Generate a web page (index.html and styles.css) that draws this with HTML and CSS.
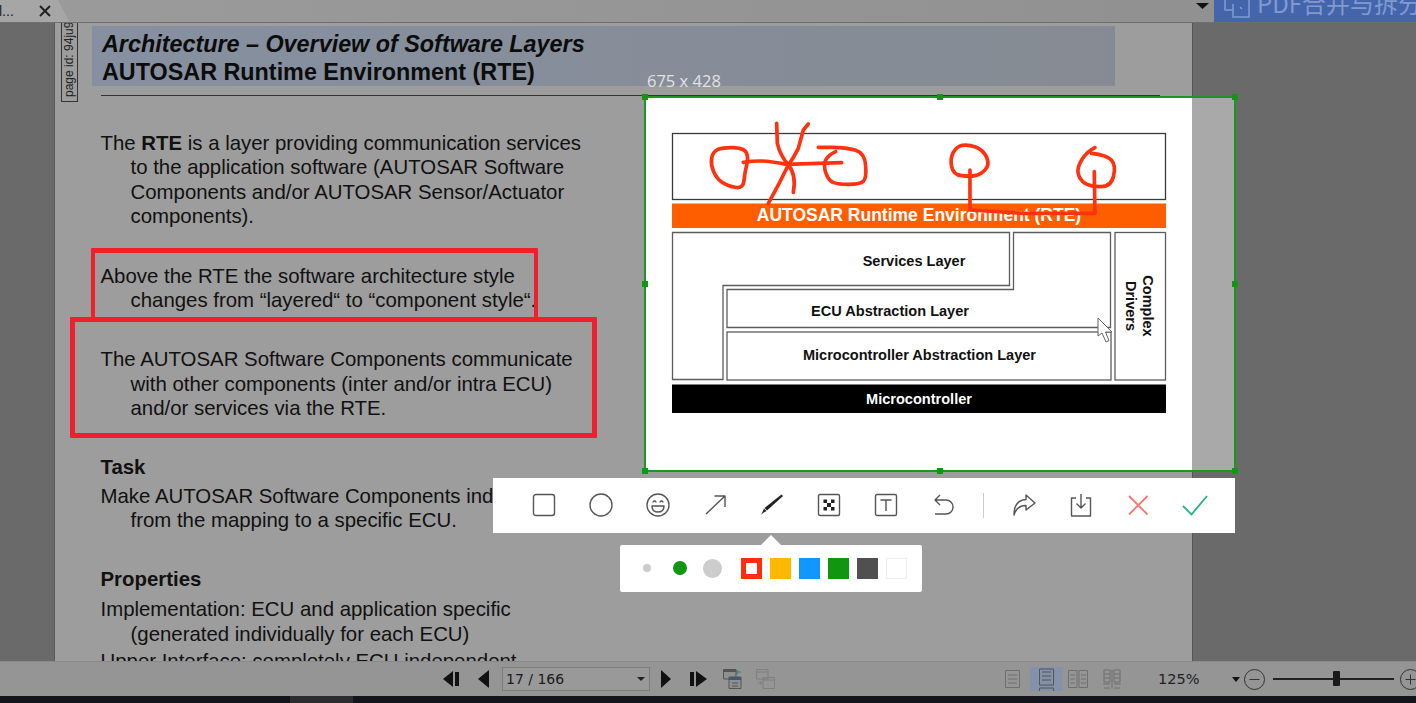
FILE: index.html
```html
<!DOCTYPE html>
<html lang="en">
<head>
<meta charset="utf-8">
<title>AUTOSAR Runtime Environment</title>
<link rel="stylesheet" href="styles.css">
</head>
<body>
<div class="app">
  <header class="tabbar">
    <div class="tab">
      <span class="tab-name">l...</span>
      <svg class="tab-close" width="12" height="12" viewBox="0 0 12 12"><path d="M1 1 11 11M11 1 1 11"/></svg>
      <svg class="tab-edge" width="14" height="23" viewBox="0 0 14 23"><path d="M0 0H2L14 23H0Z"/></svg>
    </div>
    <svg class="tab-menu" width="13" height="6" viewBox="0 0 13 6"><path d="M0 0H13L6.5 6Z"/></svg>
    <div class="merge">
      <svg class="merge-icon" width="28" height="22" viewBox="0 0 28 22"><path d="M2 -2V10H10V17H26V-2M10 10V4"/><path d="M17 7l2 2"/></svg>
      <span class="merge-text">PDF合并与拆分</span>
    </div>
  </header>

  <main class="viewer">
    <article class="page">
      <div class="page-tag">page id: 94ju9</div>
      <div class="band">
        <h1 class="title-a">Architecture – Overview of Software Layers</h1>
        <h2 class="title-b">AUTOSAR Runtime Environment (RTE)</h2>
      </div>
      <hr class="rule">
      <p class="para p1">The <b>RTE</b> is a layer providing communication services<br>to the application software (AUTOSAR Software<br>Components and/or AUTOSAR Sensor/Actuator<br>components).</p>
      <p class="para p2">Above the RTE the software architecture style<br>changes from “layered“ to “component style“.</p>
      <p class="para p3">The AUTOSAR Software Components communicate<br>with other components (inter and/or intra ECU)<br>and/or services via the RTE.</p>
      <h3 class="para sub s1">Task</h3>
      <p class="para p4">Make AUTOSAR Software Components independent<br>from the mapping to a specific ECU.</p>
      <h3 class="para sub s2">Properties</h3>
      <p class="para p5">Implementation: ECU and application specific<br>(generated individually for each ECU)</p>
      <p class="para p6">Upper Interface: completely ECU independent</p>
    </article>
  </main>

  <footer class="statusbar">
    <svg class="nav n-first" width="17" height="18" viewBox="0 0 17 18"><path d="M10 1V17L0 9Z"/><path d="M12 2H16V16H12Z"/></svg>
    <svg class="nav n-prev" width="11" height="18" viewBox="0 0 11 18"><path d="M11 0V18L0 9Z"/></svg>
    <div class="combo"><span>17 / 166</span><i class="combo-caret"></i></div>
    <svg class="nav n-next" width="10" height="18" viewBox="0 0 10 18"><path d="M0 0V18L10 9Z"/></svg>
    <svg class="nav n-last" width="17" height="18" viewBox="0 0 17 18"><path d="M0 2H4V16H0Z"/><path d="M6 1V17L17 9Z"/></svg>
    <svg class="nav n-a" width="19" height="20" viewBox="0 0 19 20">
      <path class="g1" d="M.5.5H13V10H.5Z"/><path class="g2" d="M.5.5H13V3H.5Z"/>
      <path class="g3" d="M6 8H18V19.5H6Z"/><path class="g4" d="M6 8H18V11H6Z"/><path class="g5" d="M9 14H15M9 17H15"/><path class="g6" d="M18 3H13M15 1l-2 2 2 2"/>
    </svg>
    <svg class="nav n-b" width="19" height="20" viewBox="0 0 19 20">
      <path class="f1" d="M.5.5H12V10H.5Z"/><path class="f1" d="M7 8.500H18.500V19.500H7Z"/><path class="f1" d="M.5 3H12M7 11H18.500M2 14H6M4 12l2 2-2 2"/>
    </svg>
    <svg class="view v1" width="15" height="18" viewBox="0 0 15 18"><path d="M.5.5H14.500V17.500H.5ZM3 5H12M3 9H12M3 13H12"/></svg>
    <div class="view-on"><svg class="view" width="15" height="24" viewBox="0 0 15 24"><path d="M.5 1H14.500V17H.5ZM3 4H12M3 8H12M3 12H12M.5 20H14.500V24M.5 20V24"/></svg></div>
    <svg class="view v3" width="20" height="18" viewBox="0 0 20 18"><path d="M.5.5H9V17.500H.5ZM11 .5H19.500V17.500H11ZM2.500 5H7M2.500 9H7M2.500 13H7M13 5H18M13 9H18M13 13H18"/></svg>
    <svg class="view v4" width="18" height="20" viewBox="0 0 18 20"><path d="M9 .5V19.500M1 1H7V13H1ZM11 1H17V13H11ZM1 5H7M1 9H7M11 5H17M11 9H17M0 15H7M11 15H18M1 19H7M11 19H17"/></svg>
    <span class="zoom-val">125%</span>
    <svg class="caret" width="8" height="5" viewBox="0 0 8 5"><path d="M0 0H8L4 5Z"/></svg>
    <svg class="round r-minus" width="21" height="21" viewBox="0 0 21 21"><circle cx="10.500" cy="10.500" r="10"/><path d="M5.500 10.500H15.500"/></svg>
    <div class="slider"><i class="thumb"></i></div>
    <svg class="round r-plus" width="21" height="21" viewBox="0 0 21 21"><circle cx="10.500" cy="10.500" r="10"/><path d="M5.500 10.500H15.500M10.500 5.500V15.500"/></svg>
  </footer>
  <div class="taskbar"><i class="task-item"></i></div>

  <!-- annotations drawn on the dimmed page -->
  <div class="mark mark-a"></div>
  <div class="mark mark-b"></div>

  <!-- capture selection -->
  <div class="size-label">675 x 428</div>
  <section class="selection">
    <svg class="diagram" width="592" height="376" viewBox="644 96 592 376">
      <rect class="paper" x="645" y="97" width="547" height="374"/>
      <rect class="box dark" x="672.500" y="133.500" width="493" height="66"/>
      <rect class="orange" x="672" y="203.500" width="494" height="24.500"/>
      <text class="lbl-rte" x="919" y="221" text-anchor="middle">AUTOSAR Runtime Environment (RTE)</text>
      <path class="box" d="M672.500 232.500H1009.500V285.500H723V379.500H672.500Z"/>
      <path class="box" d="M727 289.500H1013.500V232.500H1110.500V327.500H727Z"/>
      <rect class="box" x="727" y="332" width="384" height="48"/>
      <rect class="box" x="1115" y="232.500" width="50.500" height="147.500"/>
      <rect class="black" x="672" y="384.500" width="494" height="28.500"/>
      <text class="lbl" x="914" y="266" text-anchor="middle">Services Layer</text>
      <text class="lbl" x="890" y="316" text-anchor="middle">ECU Abstraction Layer</text>
      <text class="lbl" x="919.500" y="360" text-anchor="middle">Microcontroller Abstraction Layer</text>
      <text class="lbl lbl-w" x="919" y="404" text-anchor="middle">Microcontroller</text>
      <text class="lbl" text-anchor="middle" transform="translate(1143 306) rotate(90)">Complex</text>
      <text class="lbl" text-anchor="middle" transform="translate(1126 306) rotate(90)">Drivers</text>
      <path class="cursor" d="M1098 318V336L1102 333 1106 342 1109 340.500 1105.500 332H1112Z"/>
      <g class="ink" transform="translate(690 115) scale(.3333)">
        <path d="M170 115Q165 100 132 98Q100 97 84 103Q68 110 65 130Q62 150 71 170Q80 190 95 201Q110 212 135 217Q160 222 162 196Q165 170 170 150Q175 130 170 115Z"/>
        <path d="M160 142Q185 138 210 138T290 148L455 143"/>
        <path d="M385 97H427Q470 97 497 106Q525 115 527 152Q530 190 520 199Q510 208 475 208Q440 208 427 201Q415 195 407 172Q400 150 407 135Q415 120 437 110"/>
        <path d="M260 25 262 85Q270 120 295 150T310 232"/>
        <path d="M355 27 340 45 325 100Q310 130 295 150L265 210 235 265"/>
        <path d="M817 91Q800 95 790 112Q780 130 785 155Q790 180 815 182Q840 185 855 182Q870 180 885 165Q900 150 890 127Q880 105 857 96Q835 88 817 91Z"/>
        <path d="M840 165V285L1000 295H1215L1213 170"/>
        <path d="M1215 98Q1190 110 1175 135Q1160 160 1165 177Q1170 195 1185 205Q1200 215 1232 215Q1265 215 1271 182Q1278 150 1264 135Q1250 120 1205 115"/>
      </g>
    </svg>
    <i class="handle h-tl"></i><i class="handle h-tc"></i><i class="handle h-tr"></i>
    <i class="handle h-ml"></i><i class="handle h-mr"></i>
    <i class="handle h-bl"></i><i class="handle h-bc"></i><i class="handle h-br"></i>
  </section>

  <nav class="toolbar">
    <span class="tool"><svg width="24" height="24" viewBox="0 0 24 24"><rect class="ln" x="1.500" y="1.500" width="21" height="21" rx="2.500"/></svg></span>
    <span class="tool"><svg width="24" height="24" viewBox="0 0 24 24"><circle class="ln" cx="12" cy="12" r="11"/></svg></span>
    <span class="tool"><svg width="24" height="24" viewBox="0 0 24 24"><circle class="ln" cx="12" cy="12" r="11"/><path class="ln" d="M7 9.500a1.500 1.500 0 0 1 3 0M14 9.500a1.500 1.500 0 0 1 3 0M6 13H18C18 17 15.500 19 12 19S6 17 6 13Z"/></svg></span>
    <span class="tool"><svg width="24" height="24" viewBox="0 0 24 24"><path class="ln" d="M3 21 22 3M11.500 3H22V14"/></svg></span>
    <span class="tool"><svg width="24" height="24" viewBox="0 0 24 24"><path class="pen" d="M21.500 1.500 23 3 7 17.500 4.500 15Z"/><path class="pen" d="M4 15.500 6.500 18 3 20 1 22 2.500 19Z"/></svg></span>
    <span class="tool"><svg width="24" height="24" viewBox="0 0 24 24"><rect class="ln" x="1.500" y="1.500" width="21" height="21" rx="1.500"/><path class="pen" d="M6.500 6.500H10V10H6.500ZM14 6.500H17.500V10H14ZM10 10H14V14H10ZM6.500 14H10V17.500H6.500ZM14 14H17.500V17.500H14Z"/></svg></span>
    <span class="tool"><svg width="24" height="24" viewBox="0 0 24 24"><rect class="ln" x="1.500" y="1.500" width="21" height="21" rx="1.500"/><path class="ln" d="M6.500 7H17.500M12 7V18"/></svg></span>
    <span class="tool"><svg width="24" height="24" viewBox="0 0 24 24"><path class="ln" d="M9 2 4 7 9 12M4 7H15C19 7 22 10 22 14S19 21 15 21H4"/></svg></span>
    <i class="tool-sep"></i>
    <span class="tool"><svg width="24" height="24" viewBox="0 0 24 24"><path class="ln" d="M14 2 23 10 14 17V12.500C8 12.500 4 15 2 22 2 13 6 7 14 6.500Z"/></svg></span>
    <span class="tool"><svg width="24" height="24" viewBox="0 0 24 24"><path class="ln" d="M7 5H2.500V23H21.500V5H17M12 1V15M7.500 10.500 12 15 16.500 10.500"/></svg></span>
    <span class="tool"><svg width="24" height="24" viewBox="0 0 24 24"><path class="x" d="M3 3 21.500 21.500M21.500 3 3 21.500"/></svg></span>
    <span class="tool"><svg width="26" height="24" viewBox="0 0 26 24"><path class="ok" d="M1 13 9.500 21.500 25 3"/></svg></span>
  </nav>
  <i class="pointer"></i>
  <div class="palette">
    <i class="dot d-s"></i><i class="dot d-m"></i><i class="dot d-l"></i>
    <i class="sw sw-red"></i><i class="sw sw-amber"></i><i class="sw sw-blue"></i><i class="sw sw-green"></i><i class="sw sw-dark"></i><i class="sw sw-white"></i>
  </div>
</div>
</body>
</html>
```
FILE: styles.css
```css
* { box-sizing: border-box; }
html, body { margin: 0; height: 100%; overflow: hidden; background: #6a6a6a; }
body { font-family: "Liberation Sans", Arial, sans-serif; color: #111; }
.app { position: relative; width: 1416px; height: 703px; display: flex; flex-direction: column; overflow: hidden; }

/* tab bar */
.tabbar { height: 23px; flex: none; display: flex; align-items: flex-start; overflow: hidden; border-bottom: 1px solid #6e6e6e; background: linear-gradient(90deg, #9b9b9b, #8f8f8f); }
.tab { width: 57px; height: 22px; position: relative; background: #a6a6a6; display: flex; align-items: center; }
.tab-name { font-size: 14px; color: #222; margin-left: -1px; width: 40px; }
.tab-close { fill: none; stroke: #222; stroke-width: 2; flex: none; }
.tab-edge { position: absolute; left: 56px; top: 0; fill: #a6a6a6; stroke: none; }
.tab-menu { margin: 3px 0 0 auto; fill: #111; flex: none; }
.merge { width: 202px; margin-left: 5px; height: 22px; flex: none; background: #4464ab; display: flex; align-items: flex-start; padding-left: 9px; overflow: hidden; color: #819ad0; }
.merge-icon { fill: none; stroke: #819ad0; stroke-width: 1.500; flex: none; }
.merge-text { font-family: "Noto Sans CJK SC", "Liberation Sans", sans-serif; font-size: 24px; line-height: 24px; margin: -9px 0 0 6px; white-space: nowrap; }

/* document */
.viewer { flex: 1; min-height: 0; padding-left: 54px; padding-right: 223px; overflow: hidden; background: #6a6a6a; }
.page { position: relative; height: 100%; border-left: 1px solid #5a5a5a; border-right: 1px solid #555; background: #9d9d9d; padding: 3px 0 0 37px; overflow: hidden; }
.page-tag { position: absolute; left: 6px; top: -4px; width: 17px; height: 83px; border: 1px solid #333; writing-mode: vertical-rl; transform: rotate(180deg); font-size: 12px; line-height: 15px; white-space: nowrap; overflow: hidden; padding-top: 4px; text-align: left; color: #222; }
.band { width: 1023px; height: 60px; background: linear-gradient(90deg, #8690a0, #868b93); padding: 5px 0 0 10px; }
.title-a, .title-b { margin: 0; font-size: 23.350px; line-height: 27.500px; font-weight: 700; color: #0c0c0c; }
.title-a { font-style: italic; }
.rule { margin: 9px 0 0 9px; width: 1059px; height: 1px; border: 0; background: #333; }
.para { margin: 0 0 0 8.500px; padding-left: 30px; text-indent: -30px; font-size: 20.400px; line-height: 24.400px; font-weight: 400; width: 520px; white-space: nowrap; }
.sub { font-weight: 700; }
.p1 { margin-top: 35px; }
.p2 { margin-top: 35px; }
.p3 { margin-top: 35px; }
.s1 { margin-top: 34px; }
.p4 { margin-top: 5px; }
.s2 { margin-top: 34px; }
.p5 { margin-top: 6px; }
.p6 { margin-top: 3px; }

/* status bar */
.statusbar { height: 36px; flex: none; display: flex; align-items: center; background: #959595; border-top: 1px solid #8a8a8a; padding: 0 0 1px 443px; overflow: hidden; }
.nav { flex: none; fill: #111; }
.n-prev { margin-left: 18px; }
.combo { width: 148px; height: 24px; margin-left: 13px; border: 1px solid #7d7d7d; background: #999; display: flex; align-items: center; justify-content: space-between; padding: 0 4px 0 3px; font-family: "DejaVu Sans", sans-serif; font-size: 14px; color: #1a1a1a; flex: none; }
.combo-caret { width: 0; height: 0; border-left: 4px solid transparent; border-right: 4px solid transparent; border-top: 4px solid #222; }
.n-next { margin-left: 11px; }
.n-last { margin-left: 19px; }
.n-a { margin-left: 16px; }
.n-b { margin-left: 14px; }
.g1, .g3 { fill: #8f8f8f; stroke: #555; }
.g2 { fill: #555; }
.g4 { fill: #3e5878; }
.g5 { fill: none; stroke: #555; }
.g6 { fill: none; stroke: #2f7a70; }
.f1 { fill: none; stroke: #7f7f7f; }
.view { flex: none; fill: none; stroke: #6f6f6f; }
.v1 { margin-left: 230px; }
.view-on { width: 32px; height: 24px; margin: 0 6px 0 10px; background: #8391ab; display: flex; justify-content: center; overflow: hidden; flex: none; }
.view-on .view { stroke: #555; margin-top: 1px; }
.v4 { margin-left: 15px; }
.zoom-val { margin-left: 37px; width: 74px; font-size: 14.500px; font-family: "DejaVu Sans", sans-serif; color: #222; flex: none; }
.caret { fill: #111; flex: none; }
.round { fill: none; stroke: #333; flex: none; }
.r-minus { margin-left: 4px; }
.slider { position: relative; width: 121px; height: 2px; margin-left: 8px; background: #222; flex: none; }
.thumb { position: absolute; left: 60px; top: -7px; width: 7px; height: 15px; background: #1a1a1a; border-radius: 1px; }
.r-plus { margin-left: 6px; }
.taskbar { position: relative; height: 7px; flex: none; background: #14141c; margin-top: -1px; }
.task-item { position: absolute; left: 290px; top: 0; width: 63px; height: 7px; background: #2b2b30; }

/* annotations */
.mark { position: absolute; border: 5px solid #f01f2c; border-radius: 1px; }
.mark-a { left: 91px; top: 248px; width: 447px; height: 74px; border-width: 5px 4px; }
.mark-b { left: 70px; top: 317px; width: 527px; height: 121px; }

/* selection */
.size-label { position: absolute; left: 647px; top: 72px; font-family: "Open Sans", sans-serif; font-size: 16.500px; line-height: 18px; color: #e2e2e2; }
.selection { position: absolute; left: 644px; top: 96px; width: 592px; height: 376px; }
.selection::after { content: ""; position: absolute; inset: 0; border: 2px solid #1b961f; }
.diagram { display: block; background: #a9a9a9; }
.paper { fill: #fff; }
.box { fill: none; stroke: #5c5c5c; stroke-width: 1.300; }
.dark { stroke: #3a3a3a; }
.orange { fill: #ff5e00; }
.black { fill: #000; }
.lbl, .lbl-rte { font-family: "Liberation Sans", Arial, sans-serif; font-weight: 700; fill: #111; }
.lbl { font-size: 14.550px; }
.lbl-rte { font-size: 17.500px; fill: #fff; }
.lbl-w { fill: #fff; }
.cursor { fill: #fff; stroke: #666; stroke-width: 1; }
.ink { fill: none; stroke: #ff3210; stroke-width: 11; stroke-linecap: round; stroke-linejoin: round; }
.handle { position: absolute; width: 6px; height: 6px; background: #129612; z-index: 1; }
.h-tl { left: -2px; top: -2px; }
.h-tc { left: 293px; top: -2px; }
.h-tr { left: 588px; top: -2px; }
.h-ml { left: -2px; top: 185px; }
.h-mr { left: 588px; top: 185px; }
.h-bl { left: -2px; top: 372px; }
.h-bc { left: 293px; top: 372px; }
.h-br { left: 588px; top: 372px; }

/* toolbar */
.toolbar { position: absolute; left: 493px; top: 478px; width: 742px; height: 55px; background: #fff; display: flex; align-items: center; padding: 0 0 1px 22px; }
.tool { width: 57px; height: 24px; display: flex; justify-content: center; flex: none; }
.tool-sep { width: 24px; height: 25px; flex: none; background: linear-gradient(#ccc, #ccc) center / 1px 100% no-repeat; }
.ln { fill: none; stroke: #555; stroke-width: 1.400; stroke-linejoin: round; }
.pen { fill: #222; }
.x { fill: none; stroke: #f8776e; stroke-width: 1.800; }
.ok { fill: none; stroke: #1fb77a; stroke-width: 1.800; }
.pointer { position: absolute; left: 761px; top: 535px; width: 0; height: 0; border-left: 10px solid transparent; border-right: 10px solid transparent; border-bottom: 10px solid #fff; }
.palette { position: absolute; left: 620px; top: 545px; width: 302px; height: 47px; background: #fff; border-radius: 2px; display: flex; align-items: center; padding: 0 0 1px 23px; }
.dot { border-radius: 50%; flex: none; }
.d-s { width: 8px; height: 8px; background: #ccc; }
.d-m { width: 14px; height: 14px; background: #129612; margin-left: 22px; }
.d-l { width: 19px; height: 19px; background: #ccc; margin-left: 16px; }
.sw { width: 21px; height: 21px; margin-left: 8px; flex: none; }
.sw-red { margin-left: 19px; background: #fff; border: 5px solid #ff2e0c; }
.sw-amber { background: #ffb800; }
.sw-blue { background: #1296ff; }
.sw-green { background: #129612; }
.sw-dark { background: #505050; }
.sw-white { background: #fff; border: 1px solid #eee; }
```
